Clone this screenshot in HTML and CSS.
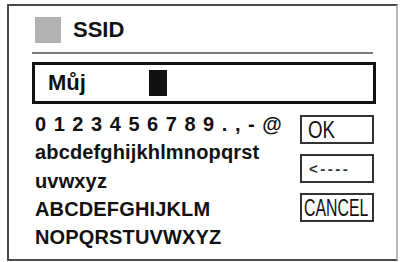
FILE: index.html
```html
<!DOCTYPE html>
<html>
<head>
<meta charset="utf-8">
<link rel="stylesheet" href="styles.css">
</head>
<body>
<div class="frame">
  <div class="header">
    <div class="swatch"></div>
    <div class="title">SSID</div>
  </div>
  <div class="rule"></div>
  <div class="input">
    <span class="value">Můj</span>
    <span class="cursor"></span>
  </div>
  <div class="kb">
    <div class="chars">
      <div class="row digits">0 1 2 3 4 5 6 7 8 9 . , - @</div>
      <div class="row">abcdefghijkhlmnopqrst</div>
      <div class="row">uvwxyz</div>
      <div class="row">ABCDEFGHIJKLM</div>
      <div class="row">NOPQRSTUVWXYZ</div>
    </div>
    <div class="buttons">
      <div class="btn"><span class="lbl ok">OK</span></div>
      <div class="btn"><span class="back">&lt;----</span></div>
      <div class="btn"><span class="lbl">CANCEL</span></div>
    </div>
  </div>
</div>
</body>
</html>
```

FILE: styles.css
```css
html, body {
  margin: 0;
  padding: 0;
  background: #fff;
}
body {
  width: 401px;
  height: 262px;
  overflow: hidden;
  font-family: "Liberation Sans", Arial, sans-serif;
  color: #111;
}
.frame {
  box-sizing: border-box;
  margin: 4px 0 0 7px;
  width: 391px;
  height: 257px;
  border: 2px solid #4a4a4a;
  border-right-color: #b8b8b8;
  padding: 11px 0 0 23px;
}
.header {
  display: flex;
  align-items: center;
  height: 26px;
  padding-left: 3px;
  gap: 12px;
}
.swatch {
  width: 26px;
  height: 26px;
  background: #b2b2b2;
}
.title {
  font-weight: bold;
  font-size: 22px;
  line-height: 26px;
}
.rule {
  margin-top: 9px;
  width: 341px;
  height: 2px;
  background: #7a7a7a;
}
.input {
  box-sizing: border-box;
  margin-top: 8px;
  width: 344px;
  height: 42px;
  border: 3px solid #111;
  display: flex;
  align-items: center;
  padding-left: 13px;
}
.value {
  font-weight: bold;
  font-size: 22px;
}
.cursor {
  margin-left: 63px;
  width: 18px;
  height: 26px;
  background: #111;
}
.kb {
  margin-top: 6px;
  display: grid;
  grid-template-columns: 268px 74px;
}
.chars {
  padding-left: 3px;
}
.row {
  font-weight: bold;
  font-size: 20px;
  line-height: 28.3px;
  letter-spacing: 0.15px;
  white-space: nowrap;
}
.digits {
  word-spacing: 1.7px;
}
.buttons {
  padding-top: 5px;
  display: flex;
  flex-direction: column;
  gap: 10px;
}
.btn {
  box-sizing: border-box;
  width: 74px;
  height: 29px;
  border: 2px solid #333;
  display: flex;
  align-items: center;
  padding-left: 2px;
  overflow: hidden;
}
.lbl {
  display: inline-block;
  font-size: 24px;
  line-height: 25px;
  transform: scaleX(0.66);
  transform-origin: left center;
  white-space: nowrap;
}
.lbl.ok {
  margin-left: 4px;
  transform: scaleX(0.78);
}
.back {
  margin-left: 5px;
  font-size: 15px;
  font-weight: bold;
  letter-spacing: 2.5px;
  color: #333;
}
```
